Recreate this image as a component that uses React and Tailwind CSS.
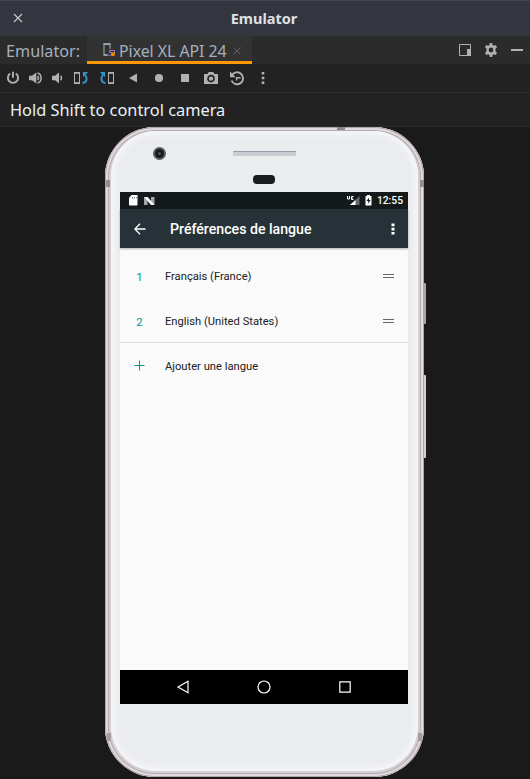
import React from "react";

const ICON = "block shrink-0";

function TitleBar() {
  return (
    <header className="grid h-9 grid-cols-[36px_1fr_36px] items-center border-t border-[#41454f] bg-[#33363f]">
      <svg className={`${ICON} mb-px ml-[13px]`} width="10" height="10" viewBox="0 0 10 10" stroke="#c8cacd" strokeWidth="1.1">
        <path d="M1 1l8 8M9 1l-8 8" />
      </svg>
      <h1 className="pr-[2px] pb-[2px] text-center font-['Noto_Sans',sans-serif] text-[14.5px] leading-5 font-bold text-[#dfe1e4]">Emulator</h1>
    </header>
  );
}

function TabBar() {
  return (
    <div className="flex h-7 items-stretch bg-[#2b2b2b]">
      <span className="w-[87px] pt-px pl-[6px] font-['Noto_Sans',sans-serif] text-[16.2px] leading-[28px] whitespace-nowrap text-[#a3b1bf]">Emulator:</span>
      <div className="flex w-[165px] items-center border-b-[3px] border-[#ff9800] bg-[#323232] pl-[15px]">
        <svg className={`${ICON} mt-[3px]`} width="14" height="16" viewBox="0 0 14 16">
          <path d="M6 13H2V2h6v5" fill="none" stroke="#9aa7b0" strokeWidth="1.1" />
          <path d="M1.500 2.200h7M1.500 12.800H5.500" stroke="#9aa7b0" strokeWidth="1.800" />
          <path d="M7.500 8.500h5v3M7.500 8.500v2h2.500M6.500 13.300h3" fill="none" stroke="#9876c8" strokeWidth="1" />
          <circle cx="11" cy="12.200" r="2" fill="#f08a00" />
        </svg>
        <span className="ml-[3px] pt-[4px] font-['Noto_Sans',sans-serif] text-[15.9px] leading-[22px] tracking-[-0.04px] whitespace-nowrap text-[#a3b1bf]">Pixel XL API 24</span>
        <svg className={`${ICON} mt-[4px] ml-[6px]`} width="8" height="8" viewBox="0 0 8 8" stroke="#5c6164" strokeWidth="1">
          <path d="M.5 .5l7 7M7.500 .5l-7 7" />
        </svg>
      </div>
      <div className="ml-auto flex items-center gap-[13px] pr-[7px]">
        <svg className={ICON} width="12" height="12" viewBox="0 0 12 12">
          <path d="M.5 .5h11v11H.5z" fill="none" stroke="#afb1b3" />
          <path d="M8 5h4v7H8z" fill="#afb1b3" />
        </svg>
        <svg className={ICON} width="14" height="14" viewBox="0 0 14 14">
          <path fill="#afb1b3" fillRule="evenodd" d="M5.800 0h2.400l.4 2 1.200.7 2-.7L13 4.200l-1.500 1.400v2.800L13 9.800 11.800 12l-2-.7-1.200.7-.4 2H5.800l-.4-2-1.200-.7-2 .7L1 9.800l1.500-1.400V5.600L1 4.200 2.200 2l2 .7L5.400 2zM7 4.600a2.400 2.400 0 100 4.800 2.400 2.400 0 000-4.800z" />
        </svg>
        <svg className={ICON} width="12" height="12" viewBox="0 0 12 12">
          <path d="M0 5h12v2H0z" fill="#afb1b3" />
        </svg>
      </div>
    </div>
  );
}

const toolbar = [
  { id: "power", w: "w-[22px]", art: <path d="M5.200 3.500a5.100 5.100 0 105.600 0M8 1.800v6" fill="none" stroke="#afb1b3" strokeWidth="1.9" /> },
  {
    id: "volume-up",
    w: "w-[22px]",
    art: (
      <>
        <path d="M2 5.700h3L9.300 2.400v11.200L5 10.300H2z" fill="#afb1b3" />
        <path d="M10.600 6a3 3 0 010 4M10.500 2.900c4.800 1.200 4.800 9 0 10.200" fill="none" stroke="#afb1b3" strokeWidth="1.500" />
      </>
    ),
  },
  {
    id: "volume-down",
    w: "w-[22px]",
    art: (
      <>
        <path d="M3 5.700h3l4-3.300v11.200l-4-3.300H3z" fill="#afb1b3" />
        <path d="M11.500 5.800a3 3 0 010 4.400" fill="none" stroke="#afb1b3" strokeWidth="1.500" />
      </>
    ),
  },
  {
    id: "rotate-left",
    w: "w-[26px]",
    art: (
      <>
        <path d="M1.500 2.700h5v10.600h-5z" fill="none" stroke="#afb1b3" />
        <path d="M1 2.800h6M1 13.200h6" stroke="#afb1b3" strokeWidth="1.700" />
        <path d="M9.500 13.200C14.300 12 14.600 8 12 4.500" fill="none" stroke="#3592c4" strokeWidth="2" />
        <path d="M10 2h5.200L10 7.300z" fill="#3592c4" />
      </>
    ),
  },
  {
    id: "rotate-right",
    w: "w-[26px]",
    art: (
      <>
        <path d="M9.500 2.700h5v10.600h-5z" fill="none" stroke="#afb1b3" />
        <path d="M9 2.800h6M9 13.200h6" stroke="#afb1b3" strokeWidth="1.700" />
        <path d="M6.500 13.200C1.700 12 1.400 8 4 4.500" fill="none" stroke="#3592c4" strokeWidth="2" />
        <path d="M6 2H.8L6 7.300z" fill="#3592c4" />
      </>
    ),
  },
  { id: "back", w: "w-[26px]", art: <path d="M12 3.500v9L4 8z" fill="#afb1b3" /> },
  { id: "home", w: "w-[26px]", art: <circle cx="8" cy="8" r="4.100" fill="#afb1b3" /> },
  { id: "overview", w: "w-[26px]", art: <path d="M4 4h8v8H4z" fill="#afb1b3" /> },
  {
    id: "screenshot",
    w: "w-[26px]",
    art: (
      <>
        <path d="M1 4h3.500l1.300-2h4.400l1.300 2H15v10H1z" fill="#afb1b3" />
        <circle cx="8" cy="8.600" r="3" fill="#afb1b3" stroke="#222" strokeWidth="1.600" />
      </>
    ),
  },
  {
    id: "snapshots",
    w: "w-[26px]",
    art: (
      <>
        <path d="M2.700 5.600A6 6 0 112.500 10.500" fill="none" stroke="#afb1b3" strokeWidth="1.900" />
        <path d="M1 1.500v5.700h5.700z" fill="#afb1b3" />
        <path d="M7.600 10.500V7.700h4" fill="none" stroke="#afb1b3" strokeWidth="1.400" />
      </>
    ),
  },
  { id: "more", w: "w-[26px]", art: <path d="M6.700 2h2.600v2.600H6.700zM6.700 6.700h2.600v2.600H6.700zM6.700 11.400h2.600V14H6.700z" fill="#afb1b3" /> },
];

function Toolbar() {
  return (
    <div className="flex h-[29px] items-center border-b border-[#2d2d2d] bg-[#222222] pl-[2px]">
      {toolbar.map(({ id, w, art }) => (
        <span key={id} className={`flex shrink-0 justify-center ${w}`}>
          <svg className={ICON} width="16" height="16" viewBox="0 0 16 16">{art}</svg>
        </span>
      ))}
    </div>
  );
}

function StatusBar() {
  return (
    <div className="flex h-[17px] shrink-0 items-center bg-[#14191b] pr-[5px] pl-[9px]">
      <svg className={ICON} width="9" height="11" viewBox="0 0 9 11">
        <path d="M2.500 0h5.500l.5.500v9.500l-.5.500H.5L0 10V3z" fill="#fff" />
        <path d="M3 2h1v1.500H3zM5 2h1v1.500H5zM7 2h.7v1.500H7z" fill="#777" />
      </svg>
      <svg className={`${ICON} ml-[6px]`} width="11" height="10" viewBox="0 0 11 10">
        <path d="M0 1v8h3.500V4zM10.500 9V1H7v5z" fill="#a2a5a7" />
        <path d="M0 1h3.700l6.800 8H7z" fill="#fff" />
      </svg>
      <svg className={`${ICON} ml-auto`} width="13" height="11" viewBox="0 0 13 11">
        <path d="M12.500 1v9H3z" fill="#666a6c" />
        <path d="M8.500 5v5H3z" fill="#fff" />
        <path d="M.5 1v3h2V1M6.500 1.500h-2v3h2M4.500 3h1.500" fill="none" stroke="#fff" strokeWidth="1" />
      </svg>
      <svg className={`${ICON} ml-[5px]`} width="7" height="11" viewBox="0 0 7 11">
        <path d="M2 0h3v1h1.500v9.500h-6V1H2z" fill="#fff" />
        <path d="M4 2.500L1.500 6h1.700v2.700L5.600 5H4z" fill="#14191b" />
      </svg>
      <time className="ml-[5px] pt-px font-[Roboto,sans-serif] text-[10.3px] leading-4 font-medium text-white">12:55</time>
    </div>
  );
}

function AppBar() {
  return (
    <div className="z-10 flex h-[39px] shrink-0 items-center bg-[#263238] pr-[13px] pl-[14px] shadow-[0_1px_2px_rgba(0,0,0,0.3)]">
      <svg className={ICON} width="12" height="12" viewBox="0 0 12 12" fill="none" stroke="#fff" strokeWidth="1.300">
        <path d="M11.500 6H1M6 .8L.8 6 6 11.200" />
      </svg>
      <h2 className="ml-[24px] font-[Roboto,sans-serif] text-[14.15px] leading-5 font-medium whitespace-nowrap text-white">Préférences de langue</h2>
      <svg className={`${ICON} ml-auto`} width="4" height="12" viewBox="0 0 4 12" fill="#fff">
        <path d="M.5 .5h3v2.800h-3zM.5 4.700h3v2.800h-3zM.5 8.900h3v2.600h-3z" />
      </svg>
    </div>
  );
}

function Row({ marker, label, draggable }) {
  return (
    <li className="flex h-[45px] items-center pr-[14px]">
      <span className="flex w-[45px] justify-center pt-[2px] pr-[6px] font-[Roboto,sans-serif] text-[11.500px] leading-4 text-[#009688]">{marker}</span>
      <span className="pt-[2px] font-[Roboto,sans-serif] text-[11.200px] leading-4 text-[#212121]">{label}</span>
      {draggable && (
        <span className="ml-auto h-1 w-[11px] border-y border-[#656565]" />
      )}
    </li>
  );
}

function Screen() {
  return (
    <div className="ml-[9px] flex h-[512px] w-[288px] flex-col bg-[#fafafa]">
      <StatusBar />
      <AppBar />
      <ul className="flex-1 pt-[5px]">
        <Row marker="1" label="Français (France)" draggable />
        <Row marker="2" label="English (United States)" draggable />
        <li className="-mt-px h-px bg-[#dadada]" />
        <Row
          label="Ajouter une langue"
          marker={
            <svg className={`${ICON} mb-[2px]`} width="11" height="11" viewBox="0 0 11 11" stroke="#009688">
              <path d="M5.500 .5v10M.5 5.500h10" />
            </svg>
          }
        />
      </ul>
      <div className="flex h-[34px] items-center justify-center gap-[67px] bg-black">
        <svg className={ICON} width="14" height="14" viewBox="0 0 14 14" fill="none" stroke="#fff" strokeWidth="1.200">
          <path d="M12 1.200v11.600L2 7z" />
        </svg>
        <svg className={ICON} width="14" height="14" viewBox="0 0 14 14" fill="none" stroke="#fff" strokeWidth="1.200">
          <circle cx="7" cy="7" r="6" />
        </svg>
        <svg className={ICON} width="14" height="14" viewBox="0 0 14 14" fill="none" stroke="#fff" strokeWidth="1.200">
          <path d="M1.800 1.800h10.400v10.400H1.800z" />
        </svg>
      </div>
    </div>
  );
}

function Phone() {
  return (
    <div className="relative ml-[105px] h-[650px] w-[319px] rounded-[50px] bg-[#d5ced2] pt-1 shadow-[inset_0_0_0_1px_#afa6aa,inset_0_0_0_3px_#e1dade,inset_0_0_0_4px_#b4abb0]">
      <div className="ml-[6px] h-[640px] w-[307px] rounded-[45px] bg-[#ebecee] shadow-[inset_0_0_4px_4px_#f4f5f8]">
        <div className="flex h-[61px] w-[306px] flex-col items-center">
          <div className="grid h-[45px] w-full grid-cols-[122px_64px_1fr] items-center">
            <span className="ml-[42px] flex h-[13px] w-[13px] items-center justify-center rounded-full border-2 border-[#5b5c60] bg-[#16191f]">
              <span className="h-[3px] w-[3px] rounded-full bg-[#5c5940]" />
            </span>
            <span className="h-[5px] w-[63px] rounded-[1px] border-t border-[#959cab] bg-[#c9ccd3]" />
          </div>
          <span className="-mt-px h-[9px] w-[22px] rounded-[4px] bg-[#1b1c20]" />
        </div>
        <Screen />
      </div>
      <span className="absolute top-0 left-[232px] h-[3px] w-[8px] bg-[#8c858a]" />
      <span className="absolute top-[53px] left-px h-[7px] w-[4px] bg-[#918a8e]" />
      <span className="absolute top-[53px] right-0 h-[7px] w-[4px] bg-[#918a8e]" />
      <span className="absolute bottom-[36px] left-[2px] h-[8px] w-[4px] bg-[#a39ca0]" />
      <span className="absolute right-[2px] bottom-[36px] h-[8px] w-[4px] bg-[#a39ca0]" />
      <span className="absolute top-[156px] -right-[2px] h-[41px] w-[2px] rounded-r-[1px] bg-[#aaa4a6]" />
      <span className="absolute top-[248px] -right-[2px] h-[83px] w-[2px] rounded-r-[1px] bg-[#d1d0cd]" />
    </div>
  );
}

export default function App() {
  return (
    <div className="flex h-[779px] w-[530px] flex-col overflow-hidden bg-[#1a1a1a]">
      <TitleBar />
      <TabBar />
      <Toolbar />
      <p className="h-[34px] border-b border-[#2a2a2a] bg-[#222222] pl-[10px] font-['Noto_Sans',sans-serif] text-[16.35px] leading-[34px] text-[#e8f2f5]">Hold Shift to control camera</p>
      <Phone />
    </div>
  );
}
